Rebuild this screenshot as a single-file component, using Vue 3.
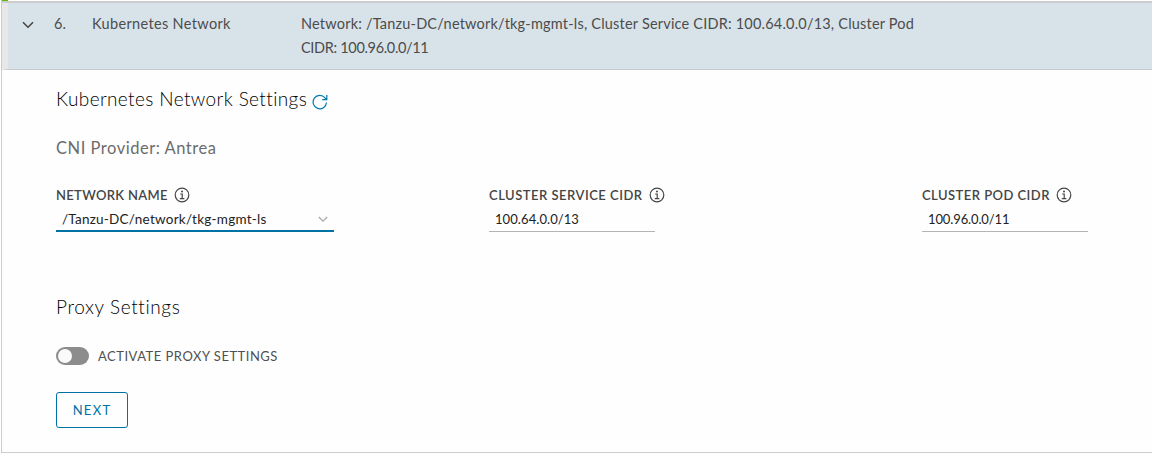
<script setup>
const fields = [
  { id: 'net', label: 'NETWORK NAME', value: '/Tanzu-DC/network/tkg-mgmt-ls', select: true },
  { id: 'svc', label: 'CLUSTER SERVICE CIDR', value: '100.64.0.0/13' },
  { id: 'pod', label: 'CLUSTER POD CIDR', value: '100.96.0.0/11' },
]
</script>

<template>
  <main class="page">
    <div class="previous"><i></i></div>
    <section class="panel">
      <header class="head">
        <svg class="caret" width="12" height="8" viewBox="0 0 12 8"><path d="M1 1.3 6 6.2 11 1.3" /></svg>
        <span class="number">6.</span>
        <span class="title">Kubernetes Network</span>
        <p class="summary">
          <span class="line one">Network: /Tanzu-DC/network/tkg-mgmt-ls, Cluster Service CIDR: 100.64.0.0/13, Cluster Pod</span>
          <span class="line two">CIDR: 100.96.0.0/11</span>
        </p>
      </header>
      <div class="body">
        <h2 class="heading">
          <span class="kns">Kubernetes Network Settings</span>
          <svg class="refresh" width="16" height="16" viewBox="0 0 16 16"><path d="M14.5 8.5A6.7 6.7 0 1 1 13 3.8L14.5 5.5M14.8 1V5.6H10.2" /></svg>
        </h2>
        <p class="provider">CNI Provider: Antrea</p>
        <div class="fields">
          <div v-for="f in fields" :key="f.id" class="field" :class="f.id">
            <div class="label">
              <span>{{ f.label }}</span>
              <svg class="info" width="16" height="16" viewBox="0 0 16 16">
                <circle cx="8" cy="8" r="6.8" />
                <path d="M6.2 7H8.2V11.6M5.8 11.7H10.4" />
                <circle class="dot" cx="8" cy="4.4" r="1" />
              </svg>
            </div>
            <div class="control">
              <span>{{ f.value }}</span>
              <svg v-if="f.select" class="arrow" width="10" height="7" viewBox="0 0 10 7"><path d="M.8 1 5 5.2 9.2 1" /></svg>
            </div>
          </div>
        </div>
        <h2 class="heading proxy"><span>Proxy Settings</span></h2>
        <div class="toggle"><span class="switch"><i></i></span><span class="caption">ACTIVATE PROXY SETTINGS</span></div>
        <button class="next"><span>NEXT</span></button>
      </div>
    </section>
  </main>
</template>

<style>
body { background: #fff; }
</style>

<style scoped>
* { box-sizing: border-box; margin: 0; padding: 0; }
.page { height: 453px; overflow: hidden; padding-left: 1px; font-family: Lato, "Open Sans", sans-serif; font-size: 14px; white-space: nowrap; color: #454545; }
svg { display: block; flex: none; fill: none; }
.previous { height: 1px; border-left: 1px solid #ccc; }
.previous i { display: block; width: 6px; height: 1px; background: #60b515; }
.panel { height: 452px; border: solid #ccc; border-width: 2px 0 1px 1px; background: #fefefe; }
.head { display: flex; height: 67px; border-left: 6px solid #e8e8e8; border-bottom: 1px solid #c5c9cb; background: #d8e3e9; padding: 9px 0 0 14px; font-size: 14.5px; line-height: 24px; color: #4c4c4c; }
.caret { margin-top: 9px; stroke: #454545; stroke-width: 1.6; }
.number { width: 38px; margin-left: 20px; letter-spacing: .2px; }
.title { width: 209px; letter-spacing: .34px; }
.line { display: block; }
.one { letter-spacing: .2px; }
.two { letter-spacing: -.33px; }
.body { padding-left: 54px; }
.heading { display: flex; height: 24px; margin-top: 17px; font-size: 19px; font-weight: 300; line-height: 24px; color: #000; }
.kns { width: 256px; letter-spacing: .38px; }
.refresh { margin-top: 7px; stroke: #0079ad; stroke-width: 1.2; }
.provider { margin-top: 25px; line-height: 24px; font-size: 16.5px; letter-spacing: .52px; color: #6c6c6c; }
.fields { display: flex; margin-top: 26px; }
.field { flex: none; width: 433px; }
.label { display: flex; align-items: center; gap: 6px; height: 18px; font-size: 13px; font-weight: 600; line-height: 18px; letter-spacing: .32px; color: #454545; }
.svc .label { letter-spacing: .5px; }
.pod .label { letter-spacing: .46px; }
.info { stroke: #454545; stroke-width: 1.2; }
.dot { fill: #454545; stroke: none; }
.control { display: flex; width: 166px; height: 28px; padding: 4px 6px 0; border-bottom: 1px solid #b3b3b3; font-size: 13px; line-height: 22px; letter-spacing: .08px; color: #222; }
.pod .control { letter-spacing: -.12px; }
.net .control { width: 278px; border-bottom: 2px solid #0072a3; justify-content: space-between; font-size: 13.5px; letter-spacing: .24px; }
.arrow { margin-top: 8px; stroke: #aaa; stroke-width: 1.3; }
.proxy { margin-top: 63px; letter-spacing: .62px; }
.toggle { display: flex; align-items: center; height: 20px; margin-top: 27px; font-size: 13px; letter-spacing: .5px; }
.switch { width: 33px; height: 18px; padding: 2px; border-radius: 9px; background: #8c8c8c; margin-right: 9px; }
.switch i { display: block; width: 14px; height: 14px; border-radius: 50%; background: #fafafa; }
.caption { line-height: 18px; margin-top: -1px; color: #505050; }
.next { display: block; width: 72px; height: 36px; margin-top: 26px; border: 1px solid #0072a3; border-radius: 3px; background: transparent; color: #0072a3; font: 400 13px/34px Lato, sans-serif; letter-spacing: 1.3px; }
</style>
